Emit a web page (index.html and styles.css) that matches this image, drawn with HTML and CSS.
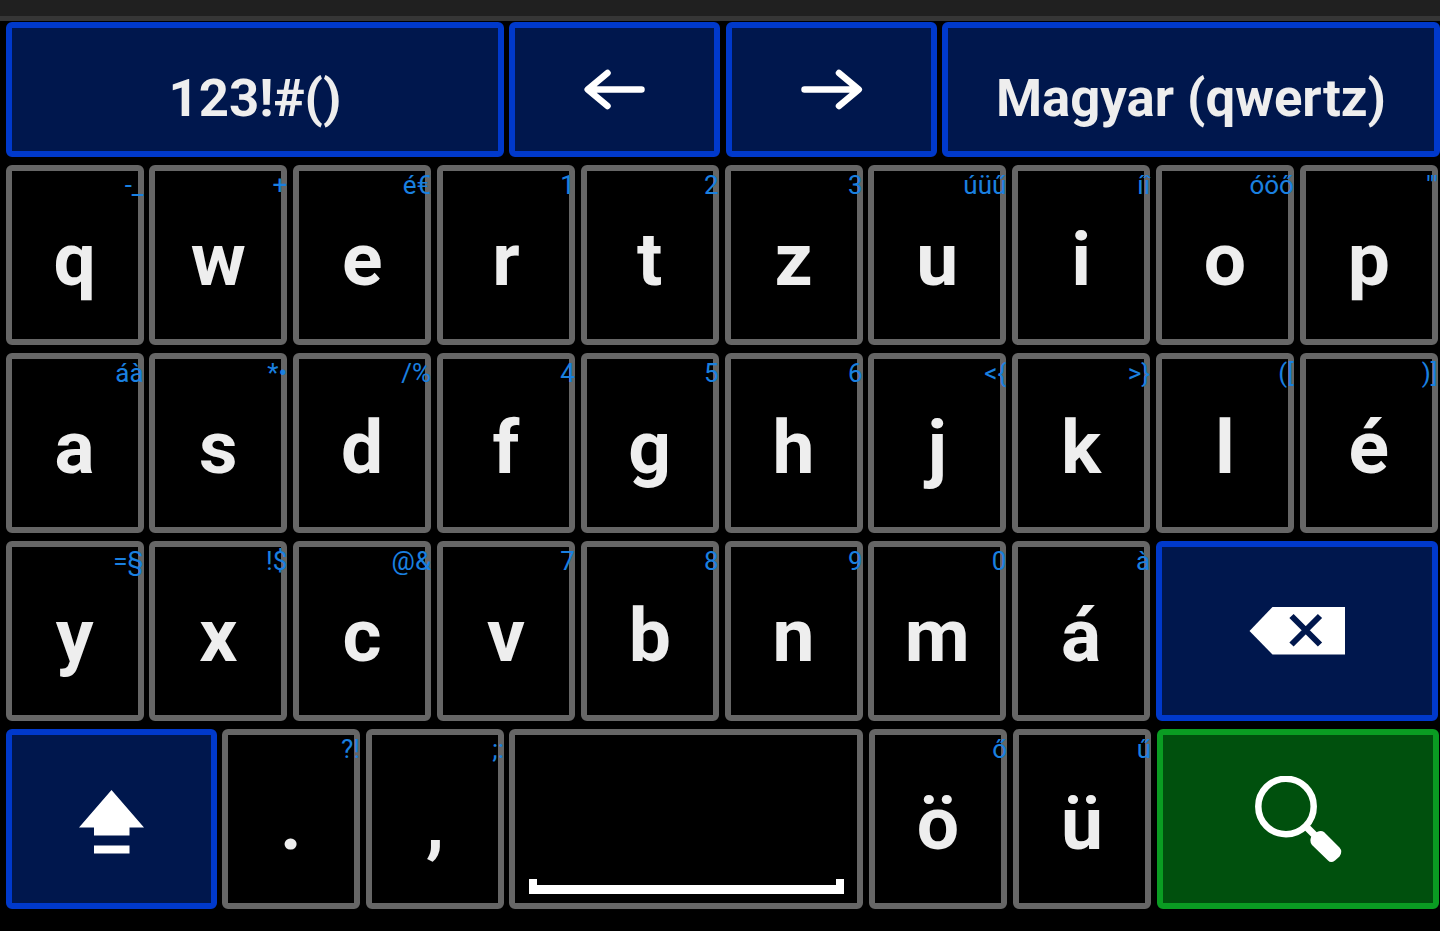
FILE: index.html
```html
<!DOCTYPE html>
<html lang="hu">
<head>
    <meta charset="UTF-8">
    <meta name="viewport" content="width=device-width, initial-scale=1.0">
    <title>Keyboard</title>
    <link rel="stylesheet" href="styles.css">
</head>
<body>
    <div class="top-strip"></div>
    <div class="keyboard">
        <div class="row row-top">
            <div class="key special wide snug">123!#()</div>
            <div class="key special medium">
                <svg class="arrow" width="64" height="42" viewBox="0 0 64 42"><path d="M24.500 4 4.700 20.500l19.800 16.500M5 20.500h53.500"/></svg>
            </div>
            <div class="key special medium snug">
                <svg class="arrow" width="64" height="42" viewBox="0 0 64 42"><path d="M39 4 58.800 20.500 39 37M58.500 20.500H4.500"/></svg>
            </div>
            <div class="key special wide">Magyar (qwertz)</div>
        </div>
        <div class="row">
            <div class="key">q<span class="hint">-_</span></div>
            <div class="key">w<span class="hint">+</span></div>
            <div class="key">e<span class="hint">é€</span></div>
            <div class="key">r<span class="hint">1</span></div>
            <div class="key">t<span class="hint">2</span></div>
            <div class="key">z<span class="hint">3</span></div>
            <div class="key">u<span class="hint">úüű</span></div>
            <div class="key">i<span class="hint">íî</span></div>
            <div class="key">o<span class="hint">óöő</span></div>
            <div class="key">p<span class="hint">'"</span></div>
        </div>
        <div class="row">
            <div class="key">a<span class="hint">áà</span></div>
            <div class="key">s<span class="hint">*•</span></div>
            <div class="key">d<span class="hint">/%</span></div>
            <div class="key">f<span class="hint">4</span></div>
            <div class="key">g<span class="hint">5</span></div>
            <div class="key">h<span class="hint">6</span></div>
            <div class="key">j<span class="hint">&lt;{</span></div>
            <div class="key">k<span class="hint">&gt;}</span></div>
            <div class="key">l<span class="hint">([</span></div>
            <div class="key">é<span class="hint">)]</span></div>
        </div>
        <div class="row">
            <div class="key">y<span class="hint">=§</span></div>
            <div class="key">x<span class="hint">!$</span></div>
            <div class="key">c<span class="hint">@&amp;</span></div>
            <div class="key">v<span class="hint">7</span></div>
            <div class="key">b<span class="hint">8</span></div>
            <div class="key">n<span class="hint">9</span></div>
            <div class="key">m<span class="hint">0</span></div>
            <div class="key">á<span class="hint">à</span></div>
            <div class="key special double">
                <svg width="96" height="48" viewBox="0 0 96 48">
                    <path fill="#fff" d="M.5 24 23.500 0H96v47.500H23.500z"/>
                    <path fill="none" stroke="#00174d" stroke-width="6" d="m42.500 9 28.500 28.500M71 9 42.500 37.500"/>
                </svg>
            </div>
        </div>
        <div class="row row-bottom">
            <div class="key special medium snug">
                <svg class="shift" width="66" height="64" viewBox="0 0 66 64"><path fill="#fff" d="M32.500 0 65 37.500H50.500V45.500h-35.500V37.500H0zM15 55.500h35.500V63.500H15z"/></svg>
            </div>
            <div class="key">.<span class="hint">?!</span></div>
            <div class="key snug">,<span class="hint">;:</span></div>
            <div class="key space"><div class="space-mark"></div></div>
            <div class="key">ö<span class="hint">ő</span></div>
            <div class="key">ü<span class="hint">ű</span></div>
            <div class="key search double">
                <svg width="87" height="87" viewBox="0 0 87 87">
                    <circle cx="31" cy="30.500" r="27.700" fill="none" stroke="#fff" stroke-width="6.500"/>
                    <path stroke="#fff" stroke-width="7" d="m50 49.500 12 12"/>
                    <path fill="#fff" d="M55.500 63Q55.500 61 57.500 59.500L62 56Q66 54 69 56L84.500 71.500Q88 75.500 84.500 80.500L80 84.500Q76 87.500 73 84.500L57 69Q55 67 55.500 63z"/>
                </svg>
            </div>
        </div>
    </div>
</body>
</html>
```
FILE: styles.css
```css
* {
    box-sizing: border-box;
}
body {
    margin: 0;
    height: 931px;
    overflow: hidden;
    background-color: #000000;
    font-family: Roboto, sans-serif;
}
.top-strip {
    height: 21px;
    background-color: #202020;
    border-bottom: 5px solid #363636;
}
.keyboard {
    display: flex;
    flex-direction: column;
    gap: 8px;
    padding-top: 1px;
}
.row {
    display: flex;
    gap: 5.8px;
    height: 180px;
    padding-left: 5.55px;
}
.row-top,
.row-bottom {
    gap: 6px;
    padding-left: 6px;
}
.row-top {
    height: 135px;
}
.key {
    position: relative;
    display: flex;
    flex-shrink: 0;
    justify-content: center;
    align-items: center;
    width: 138px;
    border: 6px solid #666666;
    border-radius: 6px;
    padding-top: 8px;
    color: #eeeeee;
    font-size: 75px;
    font-weight: bold;
    line-height: 88px;
}
.snug {
    margin-right: -1px;
}
.special {
    background-color: #00174d;
    border-color: #0039cb;
    padding-top: 0;
}
.row-top .key {
    font-size: 52.7px;
    line-height: 62px;
}
.row-top .wide {
    width: 498px;
    padding-top: 16px;
}
.medium {
    width: 211px;
}
.double {
    width: 282px;
}
.search {
    background-color: #00500d;
    border-color: #0a9c22;
    padding-top: 0;
}
.space {
    width: 354px;
    align-items: flex-end;
    padding: 0 0 9px;
}
/* small character in the corner, runs over the border */
.hint {
    position: absolute;
    top: -2px;
    right: -6px;
    color: #1a80e0;
    font-size: 26px;
    font-weight: normal;
    line-height: 32px;
}
.arrow {
    fill: none;
    stroke: #ffffff;
    stroke-width: 6.5;
    stroke-linecap: round;
    stroke-linejoin: round;
}
.shift {
    margin-top: 6px;
}
.space-mark {
    width: 315px;
    height: 15px;
    background: linear-gradient(#ffffff, #ffffff) left / 8px 100% no-repeat,
                linear-gradient(#ffffff, #ffffff) right / 8px 100% no-repeat,
                linear-gradient(#ffffff, #ffffff) bottom / 100% 9px no-repeat;
}
```
